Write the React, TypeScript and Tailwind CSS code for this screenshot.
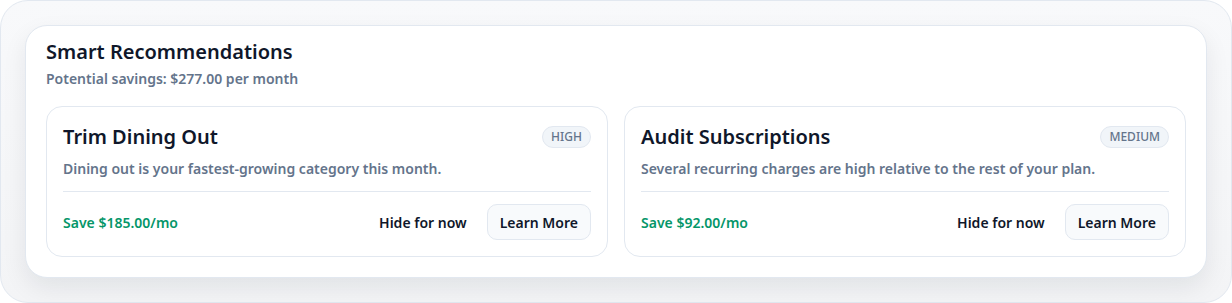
import { useState } from "react";

type Recommendation = {
  id: string;
  title: string;
  description: string;
  priority: "HIGH" | "MEDIUM";
  savings: number;
};

const RECOMMENDATIONS: Recommendation[] = [
  {
    id: "dining",
    title: "Trim Dining Out",
    description: "Dining out is your fastest-growing category this month.",
    priority: "HIGH",
    savings: 185,
  },
  {
    id: "subscriptions",
    title: "Audit Subscriptions",
    description:
      "Several recurring charges are high relative to the rest of your plan.",
    priority: "MEDIUM",
    savings: 92,
  },
];

const money = (n: number) => `$${n.toFixed(2)}`;

function RecommendationCard({
  rec,
  onHide,
}: {
  rec: Recommendation;
  onHide: () => void;
}) {
  return (
    <div className="rounded-2xl border border-[#e2e8f0] bg-white px-4 pb-4 pt-4">
      <div className="flex h-7 items-center justify-between">
        <h3 className="text-[20px] font-semibold leading-7 text-[#0f172a]">
          {rec.title}
        </h3>
        <span className="rounded-full border border-[#e2e8f0] bg-[#f1f5f9] px-2 py-[2px] text-[12px] font-medium leading-4 text-[#64748b]">
          {rec.priority}
        </span>
      </div>
      <p className="mt-2 text-[14px] font-semibold leading-5 text-[#64748b]">
        {rec.description}
      </p>
      <div className="mt-3 flex items-center justify-between border-t border-[#e2e8f0] pt-3">
        <span className="text-[14px] font-semibold text-[#059669]">
          Save {money(rec.savings)}/mo
        </span>
        <div className="flex items-center gap-5">
          <button
            type="button"
            onClick={onHide}
            className="text-[14px] font-semibold text-[#0f172a]"
          >
            Hide for now
          </button>
          <button
            type="button"
            className="h-9 rounded-[10px] border border-[#e2e8f0] bg-[#f8fafc] px-3 text-[14px] font-semibold text-[#0f172a]"
          >
            Learn More
          </button>
        </div>
      </div>
    </div>
  );
}

export default function App() {
  const [hidden, setHidden] = useState<string[]>([]);
  const visible = RECOMMENDATIONS.filter((r) => !hidden.includes(r.id));
  const total = RECOMMENDATIONS.reduce((sum, r) => sum + r.savings, 0);

  return (
    <div
      className="h-[303px] w-[1232px]"
      style={{ fontFamily: '"Noto Sans", "Open Sans", sans-serif' }}
    >
      <div className="h-full rounded-[28px] border border-[#e2e8f0] bg-gradient-to-b from-[#f8f9fb] to-[#f3f4f6] p-6">
        <div className="rounded-[22px] border border-[#e2e8f0] bg-white px-5 pb-5 pt-[12px] shadow-[0_10px_24px_rgba(15,23,42,0.08)]">
          <h2 className="text-[20px] font-semibold leading-7 text-[#0f172a]">
            Smart Recommendations
          </h2>
          <p className="mt-[3px] text-[14px] font-semibold leading-5 text-[#64748b]">
            Potential savings: {money(total)} per month
          </p>
          <div className="mt-[17px] grid grid-cols-2 gap-4">
            {visible.map((rec) => (
              <RecommendationCard
                key={rec.id}
                rec={rec}
                onHide={() => setHidden((prev) => [...prev, rec.id])}
              />
            ))}
          </div>
        </div>
      </div>
    </div>
  );
}
